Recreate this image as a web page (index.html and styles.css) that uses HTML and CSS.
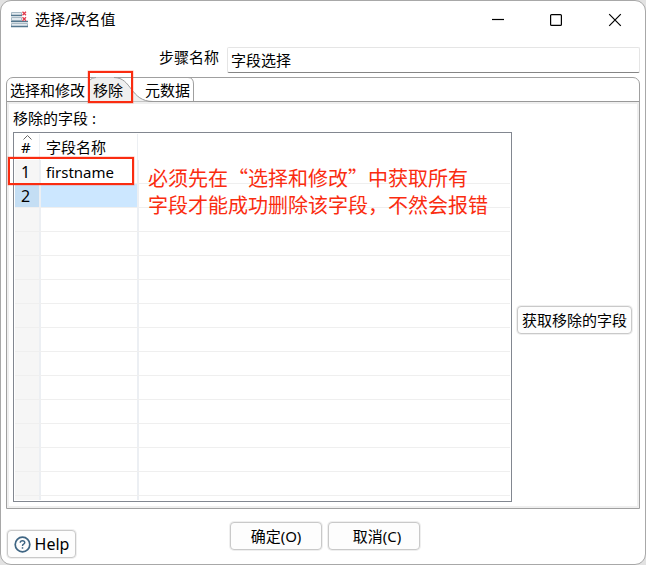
FILE: index.html
```html
<!DOCTYPE html>
<html lang="zh-CN">
<head>
<meta charset="utf-8">
<title>选择/改名值</title>
<link rel="stylesheet" href="styles.css">
</head>
<body>
<div class="window">
  <header class="titlebar">
    <svg class="app-icon" width="18" height="17" viewBox="0 0 18 17">
      <g fill="#e3eaef" stroke="#a9bac5" stroke-width="1"><path d="M.5 1.500h10v3H.5zM.5 6.500h10v3H.5zM.5 12.500h16v3H.5z"/></g>
      <path d="M0 4.500h11M0 10.500h17M0 15.500h17" stroke="#54778e" stroke-width="1.400"/>
      <path d="M11.500 .8l3.500 3.400m0-3.400l-3.500 3.400M11.500 6.300l3.500 3.400m0-3.400l-3.500 3.400" stroke="#e0384b" stroke-width="1.300"/>
    </svg>
    <h1 class="title">选择/改名值</h1>
    <svg class="controls" width="132" height="14" viewBox="0 0 132 14" fill="none" stroke="#000">
      <path d="M0 6.500h12" stroke-width="1.200"/>
      <rect x="58.600" y="1.600" width="10.800" height="10.800" rx="1" stroke-width="1.200"/>
      <path d="M117.200 1.200l11.600 11.600m0-11.600l-11.600 11.600" stroke-width="1.200"/>
    </svg>
  </header>

  <div class="step">
    <label class="step-label">步骤名称</label>
    <div class="step-input">字段选择</div>
  </div>

  <section class="folder">
    <nav class="tabs">
      <svg class="tab-shape" width="189" height="25" viewBox="0 0 189 25" fill="none">
        <path d="M81 24.500V5Q83 .5 89 .5H107C125 .5 123 24.500 146 24.500Z" fill="#efefef"/>
        <path d="M107 .5C125 .5 123 24.500 146 24.500" stroke="#999"/>
        <path d="M83 3Q85 .5 89 .5M181 .5Q186.500 .5 186.500 7V24" stroke="#a0a0a0"/>
      </svg>
      <span class="tab tab-select">选择和修改</span>
      <span class="tab tab-remove">移除</span>
      <span class="tab tab-meta">元数据</span>
      <i class="mark mark-tab"></i>
    </nav>
    <div class="panel">
      <div class="fields">
        <div class="caption">移除的字段 :</div>
        <div class="table">
          <div class="thead"><span class="num"><svg class="sort" width="9" height="5" viewBox="0 0 9 5"><path d="M.5 4.500l4-4 4 4" fill="none" stroke="#666"/></svg>#</span><span class="name">字段名称</span></div>
          <div class="row"><span class="num">1</span><span class="name">firstname</span></div>
          <div class="row selected"><span class="num">2</span><span class="name"></span></div>
          <div class="row"><span class="num"></span><span class="name"></span></div>
          <div class="row"><span class="num"></span><span class="name"></span></div>
          <div class="row"><span class="num"></span><span class="name"></span></div>
          <div class="row"><span class="num"></span><span class="name"></span></div>
          <div class="row"><span class="num"></span><span class="name"></span></div>
          <div class="row"><span class="num"></span><span class="name"></span></div>
          <div class="row"><span class="num"></span><span class="name"></span></div>
          <div class="row"><span class="num"></span><span class="name"></span></div>
          <div class="row"><span class="num"></span><span class="name"></span></div>
          <div class="row"><span class="num"></span><span class="name"></span></div>
          <div class="row"><span class="num"></span><span class="name"></span></div>
          <div class="row"><span class="num"></span><span class="name"></span></div>
          <div class="row last"><span class="num"></span><span class="name"></span></div>
          <i class="mark mark-row"></i>
          <p class="note">必须先在“选择和修改”中获取所有<br>字段才能成功删除该字段，不然会报错</p>
        </div>
      </div>
      <button class="btn fetch">获取移除的字段</button>
    </div>
  </section>

  <footer class="footer">
    <button class="btn help"><svg width="17" height="17" viewBox="0 0 17 17" fill="none" stroke="#3e6583"><circle cx="8.500" cy="8.500" r="7.300" stroke-width="1.700"/><path d="M6.200 6.800Q6.300 4.700 8.500 4.700T10.800 6.600Q10.800 7.600 9.600 8.200T8.500 10" stroke-width="1.400"/><path d="M8.500 11.200v1.500" stroke-width="1.500"/></svg>Help</button>
    <button class="btn ok">确定(O)</button>
    <button class="btn cancel">取消(C)</button>
  </footer>
</div>
</body>
</html>
```
FILE: styles.css
```css
* { box-sizing: border-box; }

body {
  margin: 0;
  background: #e2e2e2;
  color: #000;
  font: 15px/20px "Noto Sans", "Noto Sans CJK SC", sans-serif;
}

.window {
  display: flex;
  flex-direction: column;
  width: 646px;
  height: 565px;
  padding: 0 5px;
  border: 1px solid #a8a8a8;
  border-radius: 11px;
  background: #fff;
}

.titlebar {
  display: flex;
  align-items: center;
  height: 37px;
  padding-left: 5px;
}

.title {
  margin: 0 0 1px 6px;
  font-size: 15px;
  font-weight: 400;
}

.controls { margin: 0 16px 0 auto; }

.step {
  display: flex;
  height: 26px;
  margin-top: 9px;
}

.step-label {
  width: 213px;
  text-align: right;
}

.step-input {
  flex: 1;
  margin-left: 8px;
  padding: 2px 3px 0;
  border: 1px solid #e5e5e5;
  border-bottom-color: #858585;
  border-radius: 2px;
}

.folder {
  display: flex;
  flex-direction: column;
  height: 432px;
  margin-top: 4px;
  border: 1px solid #a0a0a0;
  border-radius: 7px 7px 0 0;
}

.tabs {
  position: relative;
  display: flex;
  height: 24px;
  padding: 2px 0 0 3px;
  border-bottom: 1px solid #999;
}

.tab-shape {
  position: absolute;
  left: 0;
  top: -1px;
}

.tab { position: relative; white-space: nowrap; }
.tab-remove { margin-left: 8px; }
.tab-meta { margin-left: 22px; }

.mark {
  position: absolute;
  border: 2px solid #fa2c10;
  box-shadow: 0 0 0 .5px rgba(250, 44, 16, .35);
}

.mark-tab { left: 81px; top: -7px; width: 45px; height: 32px; }
.mark-row { left: -6px; top: 24px; width: 126px; height: 28px; }

.panel {
  flex: 1;
  display: flex;
  border: 2px solid #efefef;
  padding: 4px 5px 3px 4px;
}

.caption { height: 24px; }

.table {
  position: relative;
  width: 499px;
  height: 370px;
  padding: 1px;
  border: 1px solid #828790;
}

.thead, .row {
  display: flex;
  height: 24px;
  line-height: 25px;
}

.thead { height: 26px; line-height: 27px; }
.row { border-bottom: 1px solid #efefef; }
.last { border-bottom: 0; height: 4px; }

.num {
  position: relative;
  width: 26px;
  padding-left: 6px;
  border-right: 2px solid #eceff3;
  background: #f6f6f6;
}

.row .num { font-size: 16px; }

.name {
  width: 98px;
  padding-left: 5px;
  border-right: 2px solid #eceff3;
}

.thead .num { width: 25px; background: #fff; border-right-width: 1px; }
.thead .name { padding-left: 6px; border-right-width: 1px; }

.selected { background: linear-gradient(to right, #c4def4 24px, #e3eaf0 24px 26px, #cce7ff 26px 123px, #fff 123px); }
.selected .num { background: none; }
.selected .name { height: 24px; }

.sort { position: absolute; left: 8px; top: 1px; }

.note {
  position: absolute;
  left: 134px;
  top: 31px;
  margin: 0;
  color: #fa2c10;
  font: 20px/27px "Noto Sans CJK SC", sans-serif;
  white-space: nowrap;
}

.btn {
  height: 28px;
  padding: 0;
  border: 1px solid #c9c9c9;
  border-radius: 4px;
  background: #fdfdfd;
  box-shadow: 0 0 0 1px #efefef;
  color: inherit;
  font: inherit;
  white-space: nowrap;
}

.fetch { width: 115px; margin: 198px 0 0 5px; }

.footer {
  display: flex;
  padding-top: 13px;
}

.help {
  display: flex;
  align-items: center;
  justify-content: center;
  gap: 4px;
  width: 69px;
  margin: 8px 0 0 1px;
  font-size: 16px;
}

.ok { width: 92px; margin-left: 154px; }
.cancel { width: 92px; margin-left: 6px; padding-left: 6px; }
```
